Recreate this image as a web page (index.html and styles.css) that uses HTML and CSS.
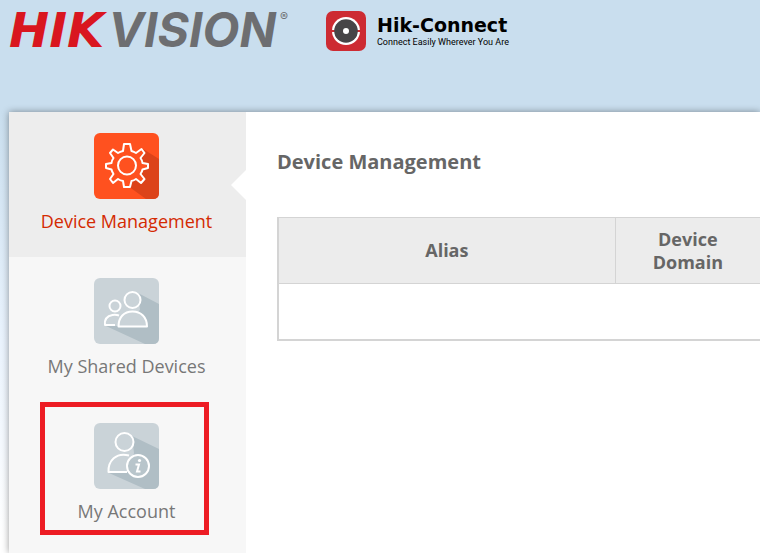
FILE: index.html
```html
<!DOCTYPE html>
<html lang="en">
<head>
<meta charset="utf-8">
<title>Hik-Connect - Device Management</title>
<link rel="stylesheet" href="styles.css">
</head>
<body>
<header class="header">
  <div class="brand"><span class="brand-hik">HIK</span><span class="brand-vision">VISION</span><span class="brand-mark">®</span></div>
  <div class="product">
    <svg class="product-icon" viewBox="0 0 40 40" aria-hidden="true">
      <rect width="40" height="40" rx="7" fill="#cd2b32"/>
      <circle cx="20" cy="20" r="14" fill="#fff"/>
      <path d="M5 20h30" stroke="#cd2b32" stroke-width="2"/>
      <circle cx="20" cy="20" r="11.800" fill="#474547"/>
      <circle cx="20" cy="20" r="3" fill="#fff"/>
    </svg>
    <div class="product-text">
      <div class="product-name">Hik-Connect</div>
      <div class="product-tagline">Connect Easily Wherever You Are</div>
    </div>
  </div>
</header>
<div class="panel">
  <nav class="sidebar">
    <a class="nav-item active" href="#devices">
      <svg class="nav-icon" viewBox="0 0 65 66" aria-hidden="true">
        <rect width="65" height="66" rx="6" fill="#ff511f"/>
        <path d="M49 16L65 26V60Q65 66 59 66H52L34 53V32Z" fill="#dc431a"/>
        <g fill="#ff511f" stroke="#fff" stroke-width="2" stroke-linejoin="round">
          <path d="M30 11H36L37.500 18Q40 18.700 42 20L47.500 16L50.500 20L46.500 25Q48 27 48.500 30L54 31V35L48.500 36.500Q48 39 46.500 41L50.500 46L47 50L42 46Q40 47.500 37.500 48L36 54H30L29 48Q26 47.500 24 46L19 50L16 46L19.500 41Q18 39 17.500 36.500L12 35V31L17.500 30Q18 27 19.500 25L16 20L19 16.500L24 20Q26 18.700 29 18Z"/>
          <circle cx="33" cy="32.500" r="9"/>
        </g>
      </svg>
      <span class="nav-label">Device Management</span>
    </a>
    <a class="nav-item" href="#shared">
      <svg class="nav-icon" viewBox="0 0 65 66" aria-hidden="true">
        <rect width="65" height="66" rx="6" fill="#cad3d8"/>
        <path d="M44 15L65 26V60Q65 66 59 66H51L12 48L26 48L46 32Z" fill="#b0bec5"/>
        <g stroke="#fff" stroke-width="2" stroke-linejoin="round" fill="none">
          <circle cx="21" cy="28" r="5.500"/>
          <path d="M25 37.500Q22 36.500 18.500 37Q10 38.500 11 47H21"/>
          <circle cx="38.500" cy="22" r="8" fill="#cad3d8"/>
          <path d="M24.500 48.500C24.500 39 30 33.500 38.500 33.500S53 39 53 48.500Z" fill="#cad3d8"/>
        </g>
      </svg>
      <span class="nav-label">My Shared Devices</span>
    </a>
    <a class="nav-item highlighted" href="#account">
      <svg class="nav-icon" viewBox="0 0 65 66" aria-hidden="true">
        <rect width="65" height="66" rx="6" fill="#cad3d8"/>
        <path d="M38 13L65 26V60Q65 66 59 66H51L15 50L36 48L40 30Z" fill="#b0bec5"/>
        <g stroke="#fff" stroke-width="2" stroke-linejoin="round">
          <circle cx="30.500" cy="19" r="9" fill="#cad3d8"/>
          <path d="M35 32.500C22 29 14 38 14.500 49H36L34 40Z" fill="#cad3d8" stroke="none"/>
          <path d="M35 32.500C22 29 14 38 14.500 49H33" fill="none"/>
          <circle cx="44" cy="43" r="11" fill="#b8c5cb"/>
        </g>
        <circle cx="45.500" cy="37.500" r="1.600" fill="#fff"/>
        <path d="M41.500 41.500H45L43 48.500H46.500" fill="none" stroke="#fff" stroke-width="2"/>
      </svg>
      <span class="nav-label">My Account</span>
    </a>
  </nav>
  <main class="content">
    <h1 class="title">Device Management</h1>
    <table class="devices">
      <thead>
        <tr><th class="col-alias" scope="col">Alias</th><th scope="col">Device<br>Domain</th></tr>
      </thead>
      <tbody>
        <tr><td colspan="2"></td></tr>
      </tbody>
    </table>
  </main>
</div>
</body>
</html>
```
FILE: styles.css
```css
* {
  box-sizing: border-box;
}

body {
  margin: 0;
  min-height: 100vh;
  display: flex;
  flex-direction: column;
  overflow-x: hidden;
  font-family: "Open Sans", "Noto Sans", sans-serif;
  color: #666;
  background: linear-gradient(#c9deee 0, #c9deee 112px, #eaf3fd 340px, #fff 540px);
}

.header {
  display: flex;
  align-items: flex-start;
  gap: 35px;
  height: 112px;
  padding: 11px 9px 0;
}

.brand {
  display: flex;
  align-items: flex-start;
  gap: 4px;
  width: 282px;
  line-height: 38px;
  font-family: Inter, sans-serif;
  font-size: 48px;
  font-style: italic;
  font-weight: 700;
  color: #6d6e71;
}

.brand-hik {
  font-family: "DejaVu Sans", sans-serif;
  color: #d9161f;
}

.brand-mark {
  font-size: 12px;
  font-style: normal;
  font-weight: 400;
  line-height: 12px;
}

.product {
  display: flex;
  gap: 11px;
  color: #000;
}

.product-icon {
  width: 40px;
  height: 40px;
}

.product-text {
  padding-top: 3px;
  white-space: nowrap;
}

.product-name {
  font-family: "DejaVu Sans", sans-serif;
  font-size: 19px;
  font-weight: 700;
  line-height: 22px;
}

.product-tagline {
  font-family: Roboto, sans-serif;
  font-size: 9px;
  line-height: 12px;
}

.panel {
  flex: 1;
  display: flex;
  margin-left: 9px;
  background: #fff;
  box-shadow: 0 0 7px rgba(0, 0, 0, 0.4);
}

.sidebar {
  flex: 0 0 237px;
  background: #f7f7f7;
}

.nav-item {
  position: relative;
  display: flex;
  flex-direction: column;
  align-items: center;
  gap: 8px;
  height: 145px;
  padding: 21px 2px 0 0;
  color: #777;
  text-decoration: none;
}

.nav-item.active {
  background: #ededed;
  color: #d42a02;
}

.nav-item.active::after {
  content: "";
  position: absolute;
  right: 0;
  top: 58px;
  border: solid transparent;
  border-width: 15px 15px 15px 0;
  border-right-color: #fff;
}

.nav-item.highlighted::after {
  content: "";
  position: absolute;
  inset: 0 37px 12px 31px;
  border: 5px solid #ed1c24;
}

.nav-icon {
  width: 65px;
  height: 66px;
}

.nav-label {
  font-size: 18px;
  line-height: 28px;
}

.content {
  flex: 1;
  padding: 34px 0 0 31px;
}

.title {
  margin: 0 0 40px;
  font-size: 20px;
  font-weight: 700;
  line-height: 31px;
}

.devices {
  width: 100%;
  table-layout: fixed;
  border-collapse: separate;
  border-spacing: 0;
  border: solid #d4d4d4;
  border-width: 1px 0 2px 2px;
}

.devices th {
  height: 66px;
  padding: 0;
  border-bottom: 1px solid #d4d4d4;
  background: #ececec;
  font-size: 18px;
  font-weight: 700;
  line-height: 23px;
}

.devices .col-alias {
  width: 70%;
  border-right: 1px solid #d4d4d4;
}

.devices td {
  height: 55px;
  padding: 0;
}
```
